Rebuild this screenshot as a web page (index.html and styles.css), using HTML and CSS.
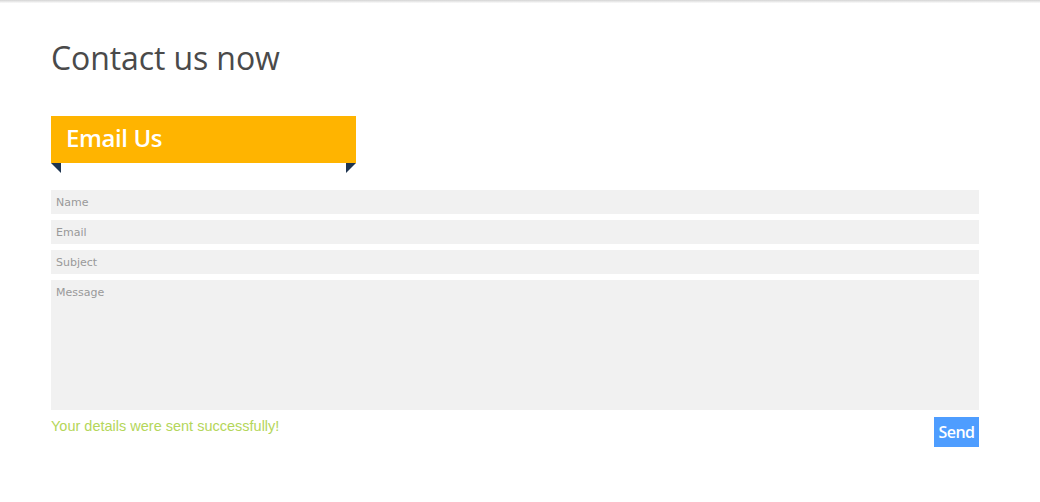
FILE: index.html
```html
<!DOCTYPE html>
<html lang="en">
<head>
    <meta charset="UTF-8">
    <meta name="viewport" content="width=device-width, initial-scale=1.0">
    <title>Contact us now</title>
    <link rel="stylesheet" href="styles.css">
</head>
<body>
<div class="top-shadow"></div>

<div class="contact">
    <h1>Contact us now</h1>

    <div class="ribbon">
        <h2>Email Us</h2>
        <span class="fold fold-left"></span>
        <span class="fold fold-right"></span>
    </div>

    <form class="contact-form">
        <input type="text" placeholder="Name">
        <input type="text" placeholder="Email">
        <input type="text" placeholder="Subject">
        <textarea placeholder="Message"></textarea>
        <div class="form-footer">
            <p class="success">Your details were sent successfully!</p>
            <button type="submit">Send</button>
        </div>
    </form>
</div>
</body>
</html>
```

FILE: styles.css
```css
body {
    margin: 0;
    padding: 0;
    background: #fff;
    font-family: "Open Sans", sans-serif;
}

.top-shadow {
    height: 3px;
    background: linear-gradient(#d4d4d4, #ececec 60%, #fafafa);
}

.contact {
    padding: 0 61px 0 51px;
}

h1 {
    margin: 33px 0 0;
    font-size: 32px;
    font-weight: 400;
    line-height: 44px;
    color: #4a4a4a;
    letter-spacing: -0.1px;
}

.ribbon {
    position: relative;
    width: 305px;
    height: 47px;
    margin-top: 36px;
    background: #ffb400;
}

.ribbon h2 {
    margin: 0;
    padding: 5px 0 0 15px;
    font-size: 24px;
    font-weight: 600;
    line-height: 34px;
    color: #fff;
    letter-spacing: -0.4px;
}

.fold {
    position: absolute;
    top: 47px;
    width: 10px;
    height: 10px;
    background: #1f3550;
}

.fold-left {
    left: 0;
    clip-path: polygon(0 0, 100% 0, 100% 100%);
}

.fold-right {
    right: 0;
    clip-path: polygon(0 0, 100% 0, 0 100%);
}

.contact-form {
    display: flex;
    flex-direction: column;
    gap: 6px;
    margin-top: 27px;
}

.contact-form input,
.contact-form textarea {
    box-sizing: border-box;
    width: 100%;
    margin: 0;
    border: none;
    outline: none;
    background: #f1f1f1;
    padding: 0 5px;
    font-family: "DejaVu Sans", Verdana, sans-serif;
    font-size: 11px;
    color: #555;
}

.contact-form input {
    height: 24px;
}

.contact-form textarea {
    height: 130px;
    padding-top: 6px;
    resize: none;
}

.contact-form ::placeholder {
    color: #999;
}

.form-footer {
    display: flex;
    justify-content: space-between;
    align-items: flex-start;
    margin-top: 1px;
}

.success {
    margin: 1px 0 0;
    font-family: "Liberation Sans", Arial, sans-serif;
    font-size: 14.5px;
    color: #b4d65a;
}

button[type="submit"] {
    height: 30px;
    width: 45px;
    padding: 0;
    border: none;
    background: #4e9dff;
    color: #fff;
    font-family: "Open Sans", sans-serif;
    font-size: 16px;
    font-weight: 600;
    letter-spacing: -0.5px;
    cursor: pointer;
}
```
